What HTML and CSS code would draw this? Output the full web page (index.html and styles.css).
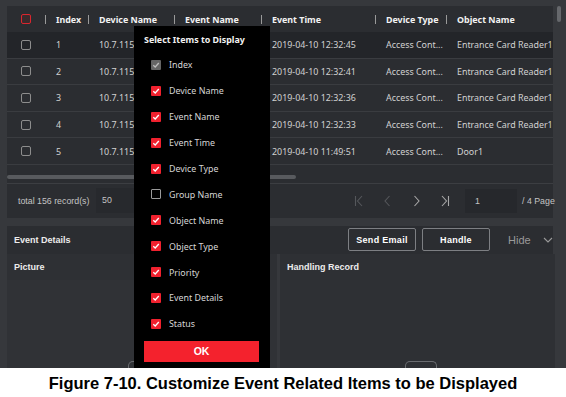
FILE: index.html
```html
<!DOCTYPE html>
<html lang="en">
<head>
    <meta charset="UTF-8">
    <meta name="viewport" content="width=device-width, initial-scale=1.0">
    <title>Event Search - Customize Items</title>
    <link rel="stylesheet" href="styles.css">
</head>
<body>
    <div class="screen">
        <div class="top">
            <div class="grid">
                <div class="row head">
                    <div class="cell chk"><span class="box red"></span></div>
                    <div class="cell sep">Index</div>
                    <div class="cell sep">Device Name</div>
                    <div class="cell sep">Event Name</div>
                    <div class="cell sep">Event Time</div>
                    <div class="cell sep">Device Type</div>
                    <div class="cell sep">Object Name</div>
                </div>
                <div class="row active">
                    <div class="cell chk"><span class="box"></span></div>
                    <div class="cell">1</div>
                    <div class="cell">10.7.115</div>
                    <div class="cell"></div>
                    <div class="cell">2019-04-10 12:32:45</div>
                    <div class="cell">Access Cont...</div>
                    <div class="cell">Entrance Card Reader1</div>
                </div>
                <div class="row">
                    <div class="cell chk"><span class="box"></span></div>
                    <div class="cell">2</div>
                    <div class="cell">10.7.115</div>
                    <div class="cell"></div>
                    <div class="cell">2019-04-10 12:32:41</div>
                    <div class="cell">Access Cont...</div>
                    <div class="cell">Entrance Card Reader1</div>
                </div>
                <div class="row">
                    <div class="cell chk"><span class="box"></span></div>
                    <div class="cell">3</div>
                    <div class="cell">10.7.115</div>
                    <div class="cell"></div>
                    <div class="cell">2019-04-10 12:32:36</div>
                    <div class="cell">Access Cont...</div>
                    <div class="cell">Entrance Card Reader1</div>
                </div>
                <div class="row">
                    <div class="cell chk"><span class="box"></span></div>
                    <div class="cell">4</div>
                    <div class="cell">10.7.115</div>
                    <div class="cell"></div>
                    <div class="cell">2019-04-10 12:32:33</div>
                    <div class="cell">Access Cont...</div>
                    <div class="cell">Entrance Card Reader1</div>
                </div>
                <div class="row">
                    <div class="cell chk"><span class="box"></span></div>
                    <div class="cell">5</div>
                    <div class="cell">10.7.115</div>
                    <div class="cell"></div>
                    <div class="cell">2019-04-10 11:49:51</div>
                    <div class="cell">Access Cont...</div>
                    <div class="cell">Door1</div>
                </div>
                <div class="hscroll"><div class="thumb"></div></div>
            </div>
            <div class="vscroll"><div class="thumb"></div></div>
        </div>

        <div class="pager">
            <span class="total">total 156 record(s)</span>
            <span class="size">50</span>
            <div class="nav">
                <svg class="dim" width="9" height="12" viewBox="0 0 9 12"><path d="M1.5 1v10M8 1L3.5 6L8 11" fill="none" stroke="currentColor" stroke-width="1.1"/></svg>
                <svg class="dim" width="9" height="12" viewBox="0 0 9 12"><path d="M6.5 1L2 6L6.5 11" fill="none" stroke="currentColor" stroke-width="1.1"/></svg>
                <svg width="9" height="12" viewBox="0 0 9 12"><path d="M2.5 1L7 6L2.5 11" fill="none" stroke="currentColor" stroke-width="1.1"/></svg>
                <svg width="9" height="12" viewBox="0 0 9 12"><path d="M1 1L5.5 6L1 11M7.5 1v10" fill="none" stroke="currentColor" stroke-width="1.1"/></svg>
            </div>
            <span class="page-input">1</span>
            <span class="page-total">/ 4 Page</span>
        </div>

        <div class="details-bar">
            <span class="bar-title">Event Details</span>
            <button class="btn">Send Email</button>
            <button class="btn wide">Handle</button>
            <span class="hide">Hide</span>
            <svg class="chev" width="10" height="6" viewBox="0 0 10 6"><path d="M1 1L5 5L9 1" fill="none" stroke="#9a9a9a" stroke-width="1.1"/></svg>
        </div>

        <div class="details-body">
            <div class="panel pic">
                <div class="panel-title">Picture</div>
                <div class="pic-area"><span class="tab left"></span></div>
            </div>
            <div class="panel record">
                <div class="panel-title">Handling Record</div>
                <div class="rec-area"><span class="tab"></span></div>
            </div>
        </div>

        <div class="popup">
            <div class="popup-title">Select Items to Display</div>
            <div class="opt"><span class="tick grey"><svg width="10" height="10" viewBox="0 0 10 10"><path d="M2.3 5.2L4.2 7L7.8 3" fill="none" stroke="#bdbdbd" stroke-width="1.3"/></svg></span>Index</div>
            <div class="opt"><span class="tick"><svg width="10" height="10" viewBox="0 0 10 10"><path d="M2.3 5.2L4.2 7L7.8 3" fill="none" stroke="#fff" stroke-width="1.3"/></svg></span>Device Name</div>
            <div class="opt"><span class="tick"><svg width="10" height="10" viewBox="0 0 10 10"><path d="M2.3 5.2L4.2 7L7.8 3" fill="none" stroke="#fff" stroke-width="1.3"/></svg></span>Event Name</div>
            <div class="opt"><span class="tick"><svg width="10" height="10" viewBox="0 0 10 10"><path d="M2.3 5.2L4.2 7L7.8 3" fill="none" stroke="#fff" stroke-width="1.3"/></svg></span>Event Time</div>
            <div class="opt"><span class="tick"><svg width="10" height="10" viewBox="0 0 10 10"><path d="M2.3 5.2L4.2 7L7.8 3" fill="none" stroke="#fff" stroke-width="1.3"/></svg></span>Device Type</div>
            <div class="opt"><span class="tick off"></span>Group Name</div>
            <div class="opt"><span class="tick"><svg width="10" height="10" viewBox="0 0 10 10"><path d="M2.3 5.2L4.2 7L7.8 3" fill="none" stroke="#fff" stroke-width="1.3"/></svg></span>Object Name</div>
            <div class="opt"><span class="tick"><svg width="10" height="10" viewBox="0 0 10 10"><path d="M2.3 5.2L4.2 7L7.8 3" fill="none" stroke="#fff" stroke-width="1.3"/></svg></span>Object Type</div>
            <div class="opt"><span class="tick"><svg width="10" height="10" viewBox="0 0 10 10"><path d="M2.3 5.2L4.2 7L7.8 3" fill="none" stroke="#fff" stroke-width="1.3"/></svg></span>Priority</div>
            <div class="opt"><span class="tick"><svg width="10" height="10" viewBox="0 0 10 10"><path d="M2.3 5.2L4.2 7L7.8 3" fill="none" stroke="#fff" stroke-width="1.3"/></svg></span>Event Details</div>
            <div class="opt"><span class="tick"><svg width="10" height="10" viewBox="0 0 10 10"><path d="M2.3 5.2L4.2 7L7.8 3" fill="none" stroke="#fff" stroke-width="1.3"/></svg></span>Status</div>
            <button class="ok">OK</button>
        </div>
    </div>

    <p class="caption">Figure 7-10. Customize Event Related Items to be Displayed</p>
</body>
</html>
```

FILE: styles.css
```css
body {
    margin: 0;
    background: #fff;
    font-family: "Noto Sans", sans-serif;
}
.screen {
    position: relative;
    height: 368px;
    overflow: hidden;
    background: #36383c;
    padding: 6px 0 0 7px;
    box-sizing: border-box;
    display: flex;
    flex-direction: column;
}
.top {
    display: flex;
}
.grid {
    width: 546px;
    background: #2b2d31;
}
.row {
    display: grid;
    grid-template-columns: 38px 43px 86px 87px 114px 71px 107px;
    height: 26.6px;
    border-bottom: 1px solid #3a3c40;
    box-sizing: border-box;
    font-size: 8.9px;
    color: #d2d2d2;
}
.row.head {
    height: 26px;
    font-weight: bold;
    color: #f2f2f2;
    border-bottom: none;
}
.row.active {
    background: #232529;
}
.cell {
    display: flex;
    align-items: center;
    padding-left: 11px;
    white-space: nowrap;
    overflow: hidden;
}
.cell.chk {
    padding-left: 14px;
}
.cell.sep {
    padding-left: 0;
}
.cell.sep::before {
    content: "";
    width: 1px;
    height: 9px;
    background: #9a9a9a;
    margin-right: 10px;
}
.box {
    width: 10px;
    height: 10px;
    border: 1px solid #8d8d8d;
    border-radius: 2px;
    box-sizing: border-box;
}
.box.red {
    border-color: #d9262e;
    background: #3a2a2c;
}
.hscroll {
    height: 18px;
    padding-top: 10px;
    box-sizing: border-box;
}
.hscroll .thumb {
    width: 289px;
    height: 4px;
    border-radius: 2px;
    background: #585a5e;
}
.vscroll {
    flex: 1;
    padding-left: 4px;
}
.vscroll .thumb {
    width: 4px;
    height: 16px;
    border-radius: 2px;
    background: #66686c;
}
.pager {
    width: 546px;
    height: 35px;
    border-top: 1px solid #3c3e42;
    box-sizing: border-box;
    background: #2b2d31;
    display: flex;
    align-items: center;
    white-space: nowrap;
    font-family: "Liberation Sans", Arial, sans-serif;
    font-size: 8.8px;
    color: #c4c4c4;
}
.pager > * {
    flex-shrink: 0;
}
.total {
    margin-left: 11px;
    width: 78px;
}
.size {
    width: 40px;
    height: 25px;
    line-height: 25px;
    padding-left: 6px;
    background: #27292d;
}
.nav {
    margin-left: 212px;
    display: flex;
    gap: 20px;
    color: #a8a8a8;
}
.nav .dim {
    color: #55575b;
}
.page-input {
    margin-left: 15px;
    width: 42px;
    height: 24px;
    line-height: 24px;
    padding-left: 10px;
    background: #26282c;
}
.page-total {
    margin-left: 5px;
}
.details-bar {
    width: 546px;
    height: 28px;
    margin-top: 8px;
    background: #2b2d31;
    display: flex;
    align-items: center;
}
.bar-title,
.panel-title {
    font-family: "Liberation Sans", Arial, sans-serif;
    font-weight: bold;
    font-size: 9px;
    color: #ececec;
}
.bar-title {
    margin-left: 7px;
    width: 334px;
}
.btn {
    width: 68px;
    height: 23px;
    margin-right: 6px;
    background: #2b2d31;
    border: 1px solid #7d7f83;
    border-radius: 2px;
    color: #fff;
    font-family: "Liberation Sans", Arial, sans-serif;
    font-weight: bold;
    font-size: 9px;
    letter-spacing: 0.3px;
    padding: 0;
}
.hide {
    margin-left: 12px;
    font-family: "Liberation Sans", Arial, sans-serif;
    font-size: 11px;
    color: #9a9a9a;
}
.chev {
    margin-left: 12px;
}
.details-body {
    flex: 1;
    width: 548px;
    display: flex;
    gap: 3px;
}
.panel {
    background: #2e3034;
    display: flex;
    flex-direction: column;
}
.pic {
    width: 270px;
}
.record {
    flex: 1;
}
.panel-title {
    height: 26px;
    line-height: 26px;
    padding-left: 7px;
}
.pic-area {
    flex: 1;
    background: #303236;
    position: relative;
}
.rec-area {
    flex: 1;
    position: relative;
}
.tab {
    position: absolute;
    bottom: -3px;
    left: 125px;
    width: 30px;
    height: 9px;
    border: 1px solid #6a6c70;
    border-bottom: none;
    border-radius: 5px 5px 0 0;
}
.tab.left {
    left: 121px;
}
.popup {
    position: absolute;
    left: 134px;
    top: 26px;
    width: 136px;
    height: 350px;
    background: #000;
    padding: 8px 11px 0 10px;
    box-sizing: border-box;
    font-size: 8.9px;
    color: #d6d6d6;
}
.popup-title {
    height: 12px;
    line-height: 12px;
    font-weight: bold;
    color: #f2f2f2;
    margin-bottom: 6px;
}
.opt {
    height: 25.9px;
    display: flex;
    align-items: center;
    padding-left: 7px;
}
.tick {
    width: 10px;
    height: 10px;
    margin-right: 8px;
    border-radius: 1px;
    background: #f0212e;
    display: flex;
}
.tick.grey {
    background: #656565;
}
.tick.off {
    background: #000;
    border: 1px solid #9a9a9a;
    box-sizing: border-box;
}
.ok {
    display: block;
    width: 115px;
    height: 21px;
    margin-top: 4px;
    border: none;
    background: #f4222d;
    color: #fff;
    font-family: "Liberation Sans", Arial, sans-serif;
    font-weight: bold;
    font-size: 10.5px;
    padding: 0;
}
.caption {
    margin: 0;
    height: 29px;
    line-height: 30px;
    text-align: center;
    font-family: "Liberation Sans", Arial, sans-serif;
    font-weight: bold;
    font-size: 16.5px;
    color: #000;
}
```
